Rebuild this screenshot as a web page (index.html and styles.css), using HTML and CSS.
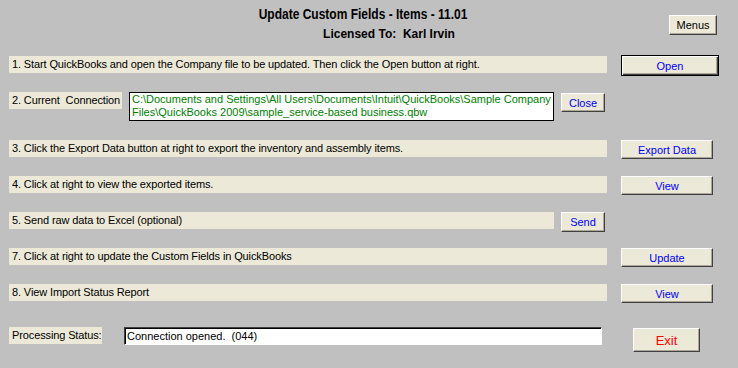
FILE: index.html
```html
<html>
<head>
<title>Update Custom Fields - Items</title>
<link rel="stylesheet" href="styles.css">
</head>
<body>
<div class="app">
    <div class="header">
        <div class="titles">
            <h1 class="title">Update Custom Fields - Items - 11.01</h1>
            <h2 class="licensed">Licensed To:&nbsp; Karl Irvin</h2>
        </div>
        <button class="btn btn-menus">Menus</button>
    </div>

    <div class="steps">
        <div class="row">
            <div class="bar bar-full">1. Start QuickBooks and open the Company file to be updated. Then click the Open button at right.</div>
            <button class="btn btn-main btn-default">Open</button>
        </div>

        <div class="row row-conn">
            <div class="bar bar-label">2. Current&nbsp; Connection</div>
            <div class="path">C:\Documents and Settings\All Users\Documents\Intuit\QuickBooks\Sample Company Files\QuickBooks 2009\sample_service-based business.qbw</div>
            <button class="btn btn-small btn-close">Close</button>
        </div>

        <div class="row">
            <div class="bar bar-full">3. Click the Export Data button at right to export the inventory and assembly items.</div>
            <button class="btn btn-main">Export Data</button>
        </div>

        <div class="row">
            <div class="bar bar-full">4. Click at right to view the exported items.</div>
            <button class="btn btn-main">View</button>
        </div>

        <div class="row">
            <div class="bar bar-short">5. Send raw data to Excel (optional)</div>
            <button class="btn btn-small">Send</button>
        </div>

        <div class="row">
            <div class="bar bar-full">7. Click at right to update the Custom Fields in QuickBooks</div>
            <button class="btn btn-main">Update</button>
        </div>

        <div class="row">
            <div class="bar bar-full">8. View Import Status Report</div>
            <button class="btn btn-main">View</button>
        </div>

        <div class="row row-status">
            <div class="bar bar-status">Processing Status:</div>
            <div class="status">Connection opened.&nbsp; (044)</div>
            <button class="btn btn-exit">Exit</button>
        </div>
    </div>
</div>
</body>
</html>
```

FILE: styles.css
```css
body {
  margin: 0;
  background-color: #c0c0c0;
  font-family: "Liberation Sans", Arial, sans-serif;
  font-size: 11px;
  color: #000;
}

.app {
  width: 738px;
  height: 368px;
  padding-left: 9px;
  box-sizing: border-box;
}

.header {
  display: grid;
  height: 56px;
  margin-left: -9px;
}

.titles,
.btn-menus {
  grid-area: 1 / 1;
}

/* the original face is a condensed bold, so squeeze it */
.title {
  margin: 5px 12px 0 0;
  font-size: 15px;
  font-weight: bold;
  line-height: 18px;
  text-align: center;
  transform: scaleX(0.8);
}

.licensed {
  margin: 3px 0 0 40px;
  font-size: 12px;
  font-weight: bold;
  line-height: 16px;
  text-align: center;
}

.steps {
  display: flex;
  flex-direction: column;
  gap: 16px;
}

.row {
  display: flex;
  align-items: flex-start;
  height: 20px;
}

.row-conn {
  height: 32px;
  gap: 7px;
}

.row-status {
  margin-top: 7px;
  height: 25px;
}

.bar {
  height: 17px;
  line-height: 17px;
  padding-left: 3px;
  background-color: #ece9d8;
  letter-spacing: -0.12px;
  white-space: nowrap;
  overflow: hidden;
  box-sizing: border-box;
}

.bar-full {
  width: 598px;
  margin-right: 14px;
}

.bar-label {
  width: 113px;
}

.bar-short {
  width: 545px;
  margin-right: 7px;
}

.bar-status {
  width: 93px;
}

.path {
  width: 425px;
  height: 29px;
  padding: 0 2px;
  border: 1px solid #000;
  background-color: #fff;
  color: #008000;
  line-height: 13px;
  box-sizing: border-box;
}

.status {
  width: 478px;
  height: 18px;
  margin-left: 22px;
  padding-left: 2px;
  border: 1px solid;
  border-color: #404040 #fff #fff #404040;
  box-shadow: inset 1px 1px 0 #000;
  background-color: #fff;
  line-height: 16px;
  box-sizing: border-box;
}

.btn {
  padding: 0;
  margin: 0;
  font-family: "Liberation Sans", Arial, sans-serif;
  font-size: 11px;
  color: #0000ff;
  background-color: #ece9d8;
  border: 1px solid;
  border-color: #fff #404040 #404040 #fff;
  box-shadow: inset -1px -1px 0 #aca899;
  box-sizing: border-box;
  cursor: pointer;
}

.btn-menus {
  justify-self: end;
  width: 48px;
  height: 20px;
  margin: 15px 21px 0 0;
  color: #000;
}

.btn-main {
  width: 92px;
  height: 19px;
}

.btn-default {
  width: 98px;
  height: 21px;
  margin-top: -1px;
  border: 1px solid #000;
  box-shadow: inset 1px 1px 0 #fff, inset -1px -1px 0 #404040, inset -2px -2px 0 #aca899;
}

.btn-small {
  width: 44px;
  height: 20px;
}

.btn-close {
  margin-top: 1px;
  height: 19px;
}

.btn-exit {
  width: 67px;
  height: 24px;
  margin: 1px 0 0 31px;
  color: #ff0000;
  font-size: 13px;
}
```
